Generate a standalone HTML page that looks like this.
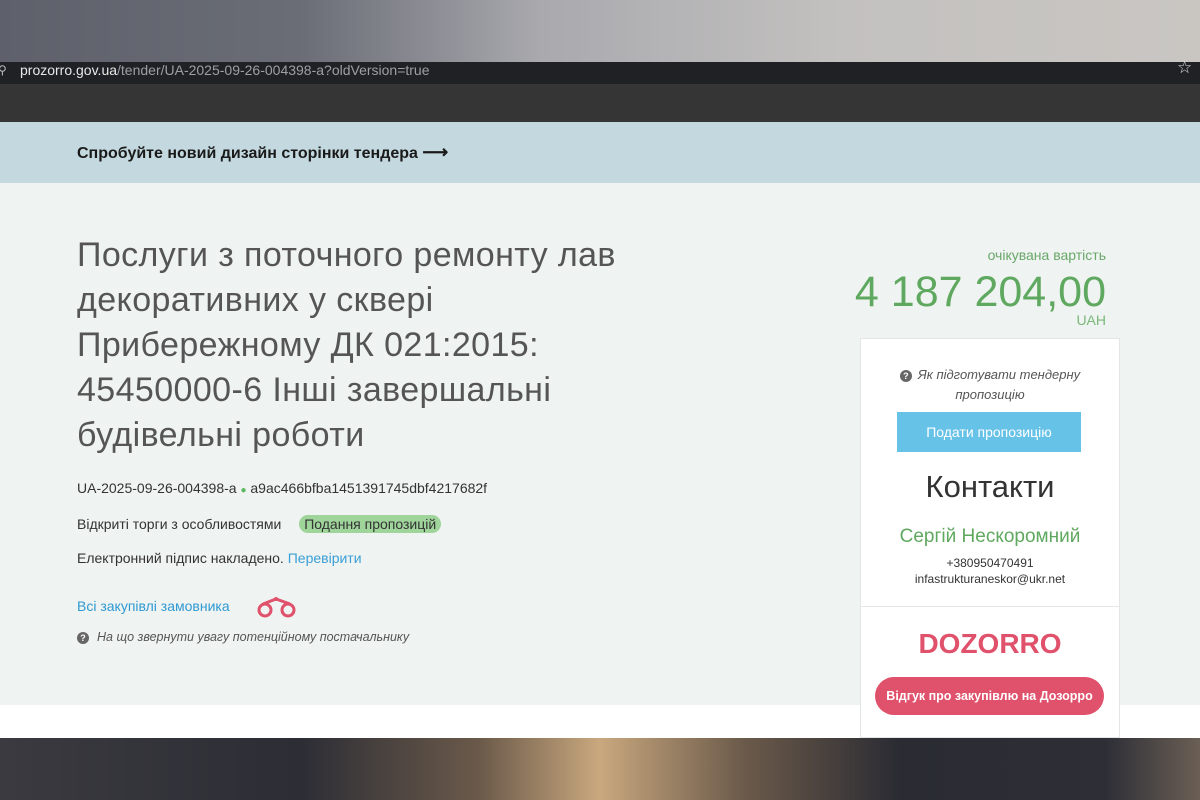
<!DOCTYPE html>
<html><head><meta charset="utf-8"><style>
*{margin:0;padding:0;box-sizing:border-box}
body{width:1200px;height:800px;overflow:hidden;font-family:"Liberation Sans",sans-serif;background:#fff;position:relative}
.abs{position:absolute}
</style></head><body>
<div class="abs" style="left:0;top:0;width:1200px;height:62px;background:linear-gradient(90deg,#5e616b 0%,#6a6d76 25%,#a9a9ae 45%,#c3c1bf 70%,#c9c6c2 100%)"></div>
<div class="abs" style="left:0;top:62px;width:1200px;height:22px;background:#202124"></div>
<div class="abs" style="left:20px;top:62px;height:18px;line-height:16px;font-size:14px;color:#e8e8e8">prozorro.gov.ua<span style="color:#9aa0a6">/tender/UA-2025-09-26-004398-a?oldVersion=true</span></div>
<div class="abs" style="left:-2px;top:62px;height:16px;line-height:16px;font-size:12px;color:#bbb">⚲</div>
<div class="abs" style="left:1177px;top:58px;font-size:17px;color:#ddd">☆</div>
<div class="abs" style="left:0;top:84px;width:1200px;height:38px;background:#353535"></div>
<div class="abs" style="left:0;top:122px;width:1200px;height:61px;background:#c3d8df"></div>
<div class="abs" style="left:77px;top:142px;font-size:16px;font-weight:bold;color:#1a1a1a">Спробуйте новий дизайн сторінки тендера <span style="font-size:18px">⟶</span></div>
<div class="abs" style="left:0;top:183px;width:1200px;height:522px;background:#eff3f1"></div>
<div class="abs" style="left:77px;top:233px;width:700px;font-size:34px;line-height:45px;color:#555;letter-spacing:0.4px;white-space:nowrap">Послуги з поточного ремонту лав<br>декоративних у сквері<br>Прибережному ДК 021:2015:<br>45450000-6 Інші завершальні<br>будівельні роботи</div>
<div class="abs" style="left:77px;top:480px;font-size:14px;color:#333">UA-2025-09-26-004398-a <span style="color:#5cb85c;font-size:10px">●</span> a9ac466bfba1451391745dbf4217682f</div>
<div class="abs" style="left:77px;top:516px;font-size:14px;color:#333">Відкриті торги з особливостями <span style="margin-left:14px;background:#9fd49a;border-radius:9px;padding:1px 5px;color:#333">Подання пропозицій</span></div>
<div class="abs" style="left:77px;top:550px;font-size:14px;color:#333">Електронний підпис накладено. <span style="color:#3a9fd6">Перевірити</span></div>
<div class="abs" style="left:77px;top:598px;font-size:14px;color:#2f9ad3">Всі закупівлі замовника</div>
<svg class="abs" style="left:256px;top:596px" width="42" height="24" viewBox="0 0 42 24"><g fill="none" stroke="#e0516c" stroke-width="3"><circle cx="9" cy="14" r="6"/><circle cx="32" cy="14" r="6"/><path d="M7 8 L20 3 L34 8"/></g><circle cx="20" cy="3" r="2" fill="#e0516c"/></svg>
<div class="abs" style="left:77px;top:630px;font-size:12.5px;font-style:italic;color:#555"><span style="display:inline-block;width:12px;height:12px;border-radius:50%;background:#666;color:#fff;font-size:9px;text-align:center;line-height:12px;font-style:normal;font-weight:bold;margin-right:8px">?</span>На що звернути увагу потенційному постачальнику</div>
<div class="abs" style="right:94px;top:247px;font-size:14px;color:#6aa86a">очікувана вартість</div>
<div class="abs" style="right:94px;top:268px;font-size:43px;color:#5fa85f">4 187 204,00</div>
<div class="abs" style="right:94px;top:312px;font-size:14px;color:#7ab77a">UAH</div>
<div class="abs" style="left:860px;top:338px;width:260px;height:400px;background:#fff;border:1px solid #e2e6e4"></div>
<div class="abs" style="left:860px;top:606px;width:260px;height:1px;background:#e6e6e6"></div>
<div class="abs" style="left:880px;top:365px;width:220px;text-align:center;font-size:13px;font-style:italic;color:#555;line-height:20px"><span style="display:inline-block;width:12px;height:12px;border-radius:50%;background:#666;color:#fff;font-size:9px;text-align:center;line-height:12px;font-style:normal;font-weight:bold;margin-right:6px">?</span>Як підготувати тендерну пропозицію</div>
<div class="abs" style="left:897px;top:412px;width:184px;height:40px;background:#67c2e8;color:#fff;font-size:14px;text-align:center;line-height:40px">Подати пропозицію</div>
<div class="abs" style="left:860px;top:469px;width:260px;text-align:center;font-size:31px;color:#333">Контакти</div>
<div class="abs" style="left:860px;top:526px;width:260px;text-align:center;font-size:19px;color:#5fa85f">Сергій Нескоромний</div>
<div class="abs" style="left:860px;top:555px;width:260px;text-align:center;font-size:12px;color:#333;line-height:16px">+380950470491<br>infastrukturaneskor@ukr.net</div>
<div class="abs" style="left:860px;top:628px;width:260px;text-align:center;font-size:28px;font-weight:bold;color:#e0516c">DOZORRO</div>
<div class="abs" style="left:875px;top:677px;width:229px;height:38px;border-radius:19px;background:#e0516c;color:#fff;font-size:12.5px;font-weight:bold;text-align:center;line-height:38px">Відгук про закупівлю на Дозорро</div>
<div class="abs" style="left:0;top:738px;width:1200px;height:62px;background:linear-gradient(90deg,#3b3a40 0%,#2c2d35 25%,#6b5a4a 40%,#c9a87e 50%,#6b5a4a 62%,#2a2b33 75%,#2d2e36 92%,#6b5f55 100%)"></div>
</body></html>
